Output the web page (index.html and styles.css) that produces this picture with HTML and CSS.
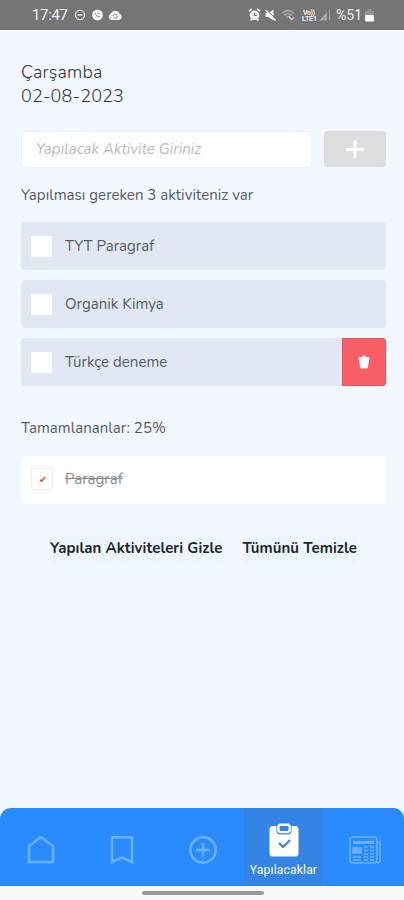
FILE: index.html
```html
<!DOCTYPE html>
<html lang="tr">
<head>
<meta charset="utf-8">
<title>Yapılacaklar</title>
<link rel="stylesheet" href="styles.css">
</head>
<body>
<header class="status">
  <span class="time">17:47</span>
  <svg class="left-icons" width="48" height="14" viewBox="0 0 48 14">
    <circle cx="6" cy="7" r="4.600" fill="none" stroke="#d8d8d8" stroke-width="1.300"/>
    <path d="M3.500 7h5" stroke="#e4e4e4" stroke-width="1.500"/>
    <circle cx="23.500" cy="7" r="5.400" fill="#f4f4f4"/>
    <path d="M21 5q1 4 5 4M23.500 5l2 1" fill="none" stroke="#999" stroke-width="1"/>
    <path d="M37.500 12a3.300 3.300 0 0 1-.5-6.400 4.600 4.600 0 0 1 8.500 0 3.300 3.300 0 0 1-.5 6.400z" fill="#f1f1f1"/>
    <path d="M39 8a2.200 2.200 0 0 1 4-.8M43.500 8a2.200 2.200 0 0 1-4 1.200" fill="none" stroke="#999"/>
  </svg>
  <svg class="right-icons" width="86" height="14" viewBox="0 0 86 14">
    <circle cx="6.500" cy="7.300" r="4.800" fill="#f5f5f5"/>
    <path d="M1 3l3-2M12 3L9 1M2.500 12.500l2-2M10.500 12.500l-2-2" stroke="#eee" stroke-width="1.800"/>
    <path d="M6.500 4.500v3h2.500" fill="none" stroke="#777" stroke-width="1.200"/>
    <path d="M17.500 5h3l5-3.500v11L20.500 9h-3z" fill="#f3f3f3"/>
    <path d="M18.500 1.500l9.500 10.500" stroke="#757575" stroke-width="1.500"/><path d="M17.500 2l10 10.500" stroke="#f3f3f3" stroke-width="1.700"/>
    <path d="M34 5.500Q40-.500 46 5.500M36 7.500q4-3.500 8 0M38.500 9.500q1.500-1.500 3.500 0" fill="none" stroke="#aaa" stroke-width="1.400"/>
    <path d="M41 8.500l2.500 3 2.500-2" fill="none" stroke="#ccc" stroke-width="1.500"/>
    <text x="55" y="6.500" class="volte" textLength="12">Vo))</text>
    <text x="54" y="13" class="volte" textLength="15">LTE1</text>
    <path d="M71 12.500l7-7v7z" fill="#aaa"/><path d="M78.500 4v8.500M81.500 1.500v11" stroke="#999" stroke-width="1.200"/>
  </svg>
  <span class="percent">%51</span>
  <svg class="battery" width="9" height="13" viewBox="0 0 9 13"><path d="M2.500 0h4v2H9v5H0V2h2.500z" fill="#929292"/><rect y="6" width="9" height="6.500" rx="1" fill="#fff"/></svg>
</header>
<main class="content">
  <h1 class="date"><span class="day">Çarşamba</span><br><span class="num">02-08-2023</span></h1>
  <form class="entry">
    <div class="field"><span>Yapılacak Aktivite Giriniz</span></div>
    <div class="add"><svg width="18" height="18" viewBox="0 0 18 18"><path d="M9 1.500v16M1 9.500h16" stroke="#fff" stroke-width="2.800" stroke-linecap="round"/></svg></div>
  </form>
  <p class="pending"><span>Yapılması gereken 3 aktiviteniz var</span></p>
  <ul class="tasks">
    <li class="task"><i class="box"></i><span>TYT Paragraf</span></li>
    <li class="task"><i class="box"></i><span>Organik Kimya</span></li>
    <li class="task"><i class="box"></i><span>Türkçe deneme</span>
      <b class="delete"><svg width="12" height="14" viewBox="0 0 12 14"><path d="M4 2q0-1.500 2-1.500T8 2h2.500q1 0 1 1v1.500H11L10 12q-.2 1.500-1.500 1.500h-5Q2.200 13.500 2 12L1 4.500H.5V3q0-1 1-1z" fill="#fff"/></svg></b></li>
  </ul>
  <p class="completed"><span>Tamamlananlar: 25%</span></p>
  <div class="task done"><i class="box checked"><svg width="7" height="7" viewBox="0 0 7 7"><path d="M1 3.500l1.500 1.800L6 1" fill="none" stroke="#f04335" stroke-width="1.400"/></svg></i><span>Paragraf</span></div>
  <div class="actions"><a class="hide">Yapılan Aktiviteleri Gizle</a><a class="clear">Tümünü Temizle</a></div>
</main>
<nav class="tabs">
  <a class="tab"><svg width="28" height="30" viewBox="0 0 28 30"><path d="M2 27V11L14 2l12 9v16z" fill="none" stroke="#69b2ff" stroke-width="2.500"/></svg></a>
  <a class="tab"><svg width="24" height="30" viewBox="0 0 24 30"><path d="M2 2.300h20v24.700l-10-4.500-10 4.500z" fill="none" stroke="#69b2ff" stroke-width="2.500"/></svg></a>
  <a class="tab"><svg width="30" height="30" viewBox="0 0 30 30"><path d="M15 8v14M8 15h14" stroke="#69b2ff" stroke-width="2.500"/><circle cx="15" cy="15" r="12.700" fill="none" stroke="#69b2ff" stroke-width="2.500"/></svg></a>
  <a class="tab active"><svg width="30" height="34" viewBox="0 0 30 34"><rect x=".5" y="3" width="29" height="30.500" rx="3.500" fill="#fff"/><rect x="7.500" y="-.5" width="15" height="12" rx="4" fill="#3484e6"/><rect x="9.300" y="1.700" width="11.400" height="7.400" rx="2.500" fill="#3484e6" stroke="#fff" stroke-width="2.400"/><path d="M10 20l4 4 7-7" fill="none" stroke="#3484e6" stroke-width="2.200"/></svg><span>Yapılacaklar</span></a>
  <a class="tab"><svg width="34" height="30" viewBox="0 0 34 30"><g fill="none" stroke="#69b2ff" stroke-width="1.500"><rect x="2" y="2" width="27" height="26" rx="3"/><path d="M29 7h3v18q0 3-3 3M5 13h8v5H5zM16 12h4M22 12h4M16 15.500h4M22 15.500h4M16 19h4M22 19h4M5 22h8M5 25h8M16 22h4M22 22h4M16 25h4M22 25h4"/></g><path d="M5 6h21v3H5zM5 13h8v5H5z" fill="#69b2ff"/></svg></a>
</nav>
<footer class="gesture"><i></i></footer>
</body>
</html>
```
FILE: styles.css
```css
* { box-sizing: border-box; }
body { margin: 0; width: 404px; height: 900px; overflow: hidden; display: flex; flex-direction: column; background: #f3f7ff; color: #565b66; font-family: Nunito, "Open Sans", sans-serif; font-size: 15px; letter-spacing: .05px; }
svg { display: block; flex: none; }
.status { height: 30px; flex: none; background: #757575; color: #f0f0f0; display: flex; align-items: center; padding-left: 32px; font: 15px Roboto, sans-serif; }
.time { width: 36px; letter-spacing: -.35px; }
.left-icons { margin-left: 6px; }
.right-icons { margin-left: 126px; }
.volte { font: bold 7px Roboto, sans-serif; fill: #eee; }
.percent { margin-left: 2px; width: 28px; font-size: 14px; letter-spacing: .1px; }
.battery { margin-left: 1px; }
.content { flex: 1; padding: 30px 18px 0 21px; }
.date { margin: 0; font-size: 18px; font-weight: 300; line-height: 24px; color: #31363f; height: 48px; letter-spacing: .15px; }
.entry { display: flex; gap: 12px; margin: 23px 0 0; height: 37px; }
.field { width: 291px; background: #fff; border: 1px solid #edf0f4; border-radius: 3px; padding-left: 14px; line-height: 35px; font-style: italic; color: #bbb; }
.add { flex: 1; background: #dcdddd; border-radius: 3px; display: grid; place-items: center; height: 36px; }
.pending, .completed { margin: 17px 0; height: 20px; line-height: 20px; }
.tasks { list-style: none; margin: 0; padding: 0; display: flex; flex-direction: column; gap: 10px; }
.task { height: 48px; background: #e1e8f4; border-radius: 4px; display: flex; align-items: center; padding-left: 10px; overflow: hidden; }
.box { width: 21px; height: 21px; background: #fff; margin-right: 13px; border-radius: 1px; flex: none; }
.delete { margin-left: auto; width: 44px; height: 48px; background: #f95e67; border: 1px solid #ec5360; display: grid; place-items: center; }
.completed { margin: 32px 0 18px; }
.done { background: #fff; color: #8c8c8c; padding-bottom: 2px; }
.done span { text-decoration: line-through; }
.box.checked { width: 22px; height: 22px; margin-right: 12px; border: 1px solid #eee; display: grid; place-items: center; }
.actions { display: flex; gap: 20px; padding-left: 29px; margin-top: 33px; font-weight: 700; color: #1f252e; line-height: 23px; letter-spacing: .07px; }
.actions a { background: #edf5ff; height: 27px; white-space: nowrap; }
.tabs { height: 78px; flex: none; display: grid; grid-template-columns: repeat(5, 81px); background: #298bff; border-radius: 11px 11px 0 0; overflow: hidden; }
.tab { display: flex; flex-direction: column; align-items: center; padding-top: 27px; }
.tab.active { background: #3484e6; padding-top: 15px; margin-left: 1px; margin-right: 1px; color: #fff; font: 12px/14px Roboto, sans-serif; }
.active span { margin-top: 6px; letter-spacing: .2px; }
.gesture { height: 14px; flex: none; background: #f8f8f8; padding: 5px 0 0 142px; }
.gesture i { display: block; width: 122px; height: 4px; border-radius: 2px; background: #999; }
```
